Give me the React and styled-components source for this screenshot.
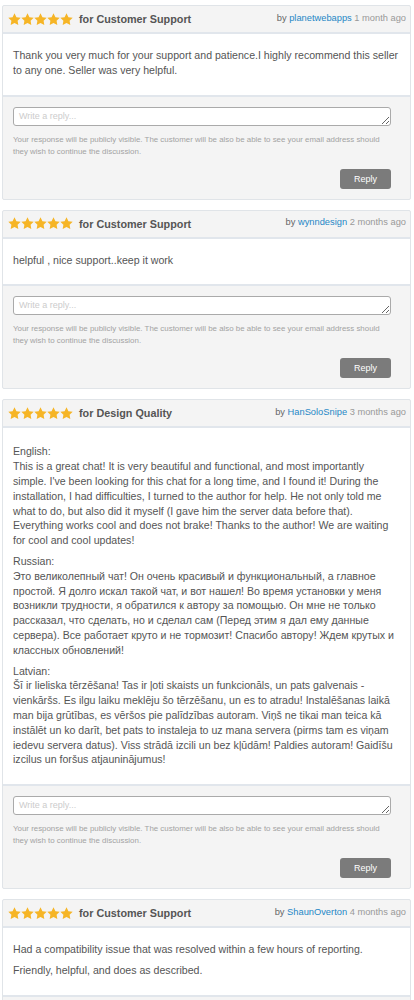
import React from "react";
import styled, { createGlobalStyle } from "styled-components";

const GlobalStyle = createGlobalStyle`
  body {
    margin: 0;
    background: #fff;
    font-family: "Liberation Sans", Arial, sans-serif;
  }
`;

const Page = styled.div`
  padding: 5px 3px 0 2px;
`;

const Card = styled.div`
  border: 1px solid #e0e4e8;
  border-radius: 2px;
  margin-bottom: 10px;
  background: #f4f4f4;
`;

const Header = styled.div`
  display: flex;
  align-items: center;
  justify-content: space-between;
  height: 26px;
  padding: 0 4px 0 5px;
  border-bottom: 2px solid #e1e6ec;
`;

const Left = styled.div`
  display: flex;
  align-items: center;
  gap: 6px;
`;

const Stars = styled.div`
  display: flex;
`;

const Title = styled.span`
  font-size: 10.8px;
  font-weight: bold;
  color: #555;
`;

const Meta = styled.span`
  font-size: 9.3px;
  color: #999;
  margin-top: -3px;
`;

const By = styled.span`
  color: #666;
`;

const User = styled.a`
  color: #2587c6;
  text-decoration: none;
`;

const Body = styled.div`
  background: #fff;
  padding: ${(p) => (p.$long ? "16px" : "14px")} 6px 11px 10px;
  border-bottom: 2px solid #e1e6ec;
`;

const Para = styled.p`
  margin: 0 0 6px;
  font-size: 10.6px;
  line-height: 14.8px;
  color: #555;
`;

const Footer = styled.div`
  padding: 10px 19px 10px 10px;
  display: flex;
  flex-direction: column;
`;

const ReplyBox = styled.textarea`
  display: block;
  box-sizing: border-box;
  width: 100%;
  height: 19px;
  margin: 0;
  padding: 2px 5px;
  border: 1px solid #aaa;
  border-radius: 3px;
  font-family: "Liberation Sans", Arial, sans-serif;
  font-size: 9px;
  line-height: 12px;
  resize: vertical;
  overflow: hidden;
  &::placeholder {
    color: #ccc;
  }
`;

const Help = styled.div`
  margin-top: 8px;
  font-size: 7.9px;
  line-height: 12px;
  color: #a3a3a3;
`;

const ReplyButton = styled.button`
  align-self: flex-end;
  margin-top: 11px;
  width: 51px;
  height: 20px;
  border: 0;
  border-radius: 3px;
  background: #7b7b7b;
  color: #fff;
  font-family: "Liberation Sans", Arial, sans-serif;
  font-size: 9px;
  padding: 0;
`;

const Star = () => (
  <svg width="13" height="13" viewBox="1.5 1.5 21 21">
    <path
      fill="#f6b526"
      d="M12 2l3.09 6.26L22 9.27l-5 4.87 1.18 6.88L12 17.77l-6.18 3.25L7 14.14 2 9.27l6.91-1.01L12 2z"
    />
  </svg>
);

// each paragraph is a list of lines, broken where the original breaks them
const reviews = [
  {
    topic: "Customer Support",
    user: "planetwebapps",
    when: "1 month ago",
    text: [
      [
        "Thank you very much for your support and patience.I highly recommend this seller to any one. Seller was very helpful.",
      ],
    ],
  },
  {
    topic: "Customer Support",
    user: "wynndesign",
    when: "2 months ago",
    text: [["helpful , nice support..keep it work"]],
  },
  {
    topic: "Design Quality",
    user: "HanSoloSnipe",
    when: "3 months ago",
    long: true,
    text: [
      [
        "English:",
        "This is a great chat! It is very beautiful and functional, and most importantly",
        "simple. I've been looking for this chat for a long time, and I found it! During the",
        "installation, I had difficulties, I turned to the author for help. He not only told me",
        "what to do, but also did it myself (I gave him the server data before that).",
        "Everything works cool and does not brake! Thanks to the author! We are waiting",
        "for cool and cool updates!",
      ],
      [
        "Russian:",
        "Это великолепный чат! Он очень красивый и функциональный, а главное",
        "простой. Я долго искал такой чат, и вот нашел! Во время установки у меня",
        "возникли трудности, я обратился к автору за помощью. Он мне не только",
        "рассказал, что сделать, но и сделал сам (Перед этим я дал ему данные",
        "сервера). Все работает круто и не тормозит! Спасибо автору! Ждем крутых и",
        "классных обновлений!",
      ],
      [
        "Latvian:",
        "Šī ir lieliska tērzēšana! Tas ir ļoti skaists un funkcionāls, un pats galvenais -",
        "vienkāršs. Es ilgu laiku meklēju šo tērzēšanu, un es to atradu! Instalēšanas laikā",
        "man bija grūtības, es vēršos pie palīdzības autoram. Viņš ne tikai man teica kā",
        "instālēt un ko darīt, bet pats to instaleja to uz mana servera (pirms tam es viņam",
        "iedevu servera datus). Viss strādā izcili un bez kļūdām! Paldies autoram! Gaidīšu",
        "izcilus un foršus atjauninājumus!",
      ],
    ],
  },
  {
    topic: "Customer Support",
    user: "ShaunOverton",
    when: "4 months ago",
    text: [
      ["Had a compatibility issue that was resolved within a few hours of reporting."],
      ["Friendly, helpful, and does as described."],
    ],
  },
];

export default function App() {
  return (
    <Page>
      <GlobalStyle />
      {reviews.map((r, i) => (
        <Card key={i}>
          <Header>
            <Left>
              <Stars>
                {[...Array(5).keys()].map((s) => (
                  <Star key={s} />
                ))}
              </Stars>
              <Title>for {r.topic}</Title>
            </Left>
            <Meta>
              <By>by</By> <User href="#">{r.user}</User> {r.when}
            </Meta>
          </Header>
          <Body $long={r.long}>
            {r.text.map((lines, j) => (
              <Para key={j}>
                {lines.map((line, k) => (
                  <React.Fragment key={k}>
                    {k > 0 && <br />}
                    {line}
                  </React.Fragment>
                ))}
              </Para>
            ))}
          </Body>
          <Footer>
            <ReplyBox placeholder="Write a reply..." />
            <Help>
              Your response will be publicly visible. The customer will be also be able to see your email
              address should they wish to continue the discussion.
            </Help>
            <ReplyButton>Reply</ReplyButton>
          </Footer>
        </Card>
      ))}
    </Page>
  );
}
